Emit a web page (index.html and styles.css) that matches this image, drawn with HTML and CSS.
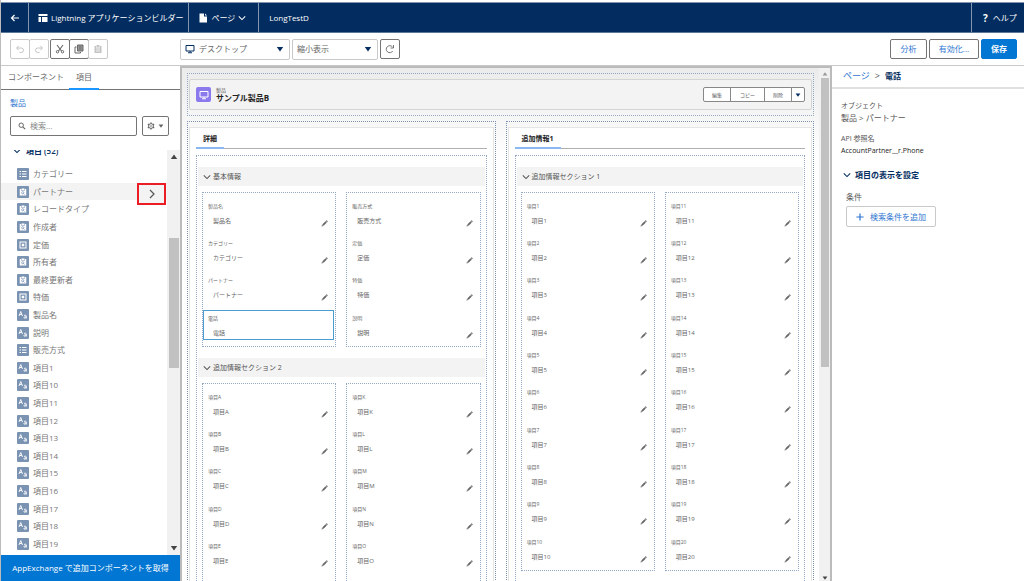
FILE: index.html
```
<!DOCTYPE html>
<html lang="ja">
<head>
<meta charset="utf-8">
<title>Lightning アプリケーションビルダー</title>
<link rel="stylesheet" href="styles.css">
</head>
<body>
<svg class="sprite" aria-hidden="true">
  <symbol id="pen" viewBox="0 0 14 14"><path d="M1 13l1-3.600 2.600 2.600zM2.600 8.800l6.400-6.400 2.600 2.600-6.400 6.400zM9.600 1.900l1-1q.7-.5 1.400.1l1 1q.6.700.1 1.400l-1 1z"/></symbol>
  <symbol id="chev" viewBox="0 0 10 10"><path d="M1 3l4 4 4-4" fill="none" stroke="currentColor" stroke-width="1.300"/></symbol>
  <symbol id="tri" viewBox="0 0 10 10"><path d="M1 2.500h8L5 8z"/></symbol>
  <symbol id="triup" viewBox="0 0 10 10"><path d="M1 7.500h8L5 2z"/></symbol>
  <symbol id="i-list" viewBox="0 0 24 24"><path d="M5 6h3v2H5zM10 6h9v2h-9zM5 11h3v2H5zM10 11h9v2h-9zM5 16h3v2H5zM10 16h9v2h-9z"/></symbol>
  <symbol id="i-look" viewBox="0 0 24 24"><path d="M9 5h6v3H9zM5.500 6H8v3h8V6h2.500v13h-13z"/><path d="M15 17l-2-2" stroke="#7b93b2" stroke-width="1.500"/><circle cx="11.500" cy="13.500" r="2.200" fill="none" stroke="#7b93b2" stroke-width="1.500"/></symbol>
  <symbol id="i-cur" viewBox="0 0 24 24"><path d="M5 5h14v14H5zM7 7v10h10V7z" fill-rule="evenodd"/><path d="M9.500 9.500h5v5h-5z"/></symbol>
  <symbol id="i-text" viewBox="0 0 24 24"><path d="M4 14l3.500-9L11 14M5.300 11h4.500" fill="none" stroke="currentColor" stroke-width="1.800"/><path d="M14 13q3-1.800 4.500.4V19M18.500 15.500q-5-.2-4.800 1.900.8 2.200 4.800-.4" fill="none" stroke="currentColor" stroke-width="1.800"/></symbol>
  <symbol id="monitor" viewBox="0 0 20 20"><path d="M2 3h16v11H2zM10 14v3M6 17.500h8" fill="none" stroke="currentColor" stroke-width="2"/></symbol>
  <symbol id="redo" viewBox="0 0 20 20"><path d="M16 8H7q-4 .5-4 4.500T7.500 17H11M12.500 3.500L17 8l-4.500 4.500" fill="none" stroke="currentColor" stroke-width="2"/></symbol>
</svg>

<header class="topbar">
  <button class="bar-item back" aria-label="戻る"><svg class="ico10" viewBox="0 0 20 20"><path d="M18 10H3M9 4l-6 6 6 6" fill="none" stroke="currentColor" stroke-width="2.400"/></svg></button>
  <div class="bar-item brand"><svg class="ico10" viewBox="0 0 20 20"><path d="M1 2h18v4H1zM1 8h5v10H1zM8 8h11v10H8z"/></svg><span>Lightning アプリケーションビルダー</span></div>
  <button class="bar-item pages"><svg class="ico10" viewBox="0 0 20 20"><path d="M3 1h9v6h6v12H3zM14 1l4 4h-4z"/></svg><span>ページ</span><svg class="ico8"><use href="#chev"/></svg></button>
  <h1 class="bar-item page-name">LongTestD</h1>
  <a class="bar-item help" href="#"><b>?</b><span>ヘルプ</span></a>
</header>

<div class="toolbar">
  <div class="group history">
    <button class="tool off" aria-label="元に戻す"><svg class="ico10 flip"><use href="#redo"/></svg></button>
    <button class="tool off" aria-label="やり直し"><svg class="ico10"><use href="#redo"/></svg></button>
  </div>
  <div class="group edit">
    <button class="tool" aria-label="切り取り"><svg class="ico10" viewBox="0 0 20 20"><path d="M4 2l9 12M16 2L7 14" stroke="currentColor" stroke-width="2.200"/><circle cx="5" cy="15.500" r="2.400" fill="none" stroke="currentColor" stroke-width="2"/><circle cx="15" cy="15.500" r="2.400" fill="none" stroke="currentColor" stroke-width="2"/></svg></button>
    <button class="tool" aria-label="コピー"><svg class="ico10" viewBox="0 0 20 20"><path d="M7 2h11v12H7z" fill="#999" stroke="currentColor" stroke-width="2"/><path d="M5 6H2v12h11v-2M10 6h5M10 10h5" fill="none" stroke="currentColor" stroke-width="2"/></svg></button>
    <button class="tool off" aria-label="貼り付け"><svg class="ico10" viewBox="0 0 20 20"><path d="M3 4h3v3h8V4h3v14H3z"/><path d="M7 2h6v4H7z"/><path d="M6 10h8M6 14h8" stroke="#fff" stroke-width="1.500"/></svg></button>
  </div>
  <div class="views">
    <label class="picker device"><svg class="ico10"><use href="#monitor"/></svg><select aria-label="デバイス"><option>デスクトップ</option></select><svg class="ico8 caret"><use href="#tri"/></svg></label>
    <label class="picker scale"><select aria-label="表示サイズ"><option>縮小表示</option></select><svg class="ico8 caret"><use href="#tri"/></svg></label>
    <button class="tool refresh" aria-label="更新"><svg class="ico10" viewBox="0 0 20 20"><path d="M15.500 14A7 7 0 1 1 15 6M17 2v6h-6" fill="none" stroke="currentColor" stroke-width="1.800"/></svg></button>
  </div>
  <div class="actions">
    <button class="btn analyze">分析</button>
    <button class="btn activate">有効化...</button>
    <button class="btn save">保存</button>
  </div>
</div>

<main class="workspace">
  <aside class="palette">
    <nav class="tabs">
      <button class="tab">コンポーネント</button>
      <button class="tab active">項目</button>
    </nav>
    <a class="object-link" href="#">製品</a>
    <div class="search-row">
      <label class="search"><svg class="ico8" viewBox="0 0 20 20"><circle cx="8" cy="8" r="5.500" fill="none" stroke="currentColor" stroke-width="2.500"/><path d="M12 12l6 6" stroke="currentColor" stroke-width="3"/></svg><input type="text" placeholder="検索..." aria-label="検索"></label>
      <button class="gear" aria-label="設定"><svg class="ico8" viewBox="0 0 20 20"><circle cx="10" cy="10" r="6" fill="none" stroke="currentColor" stroke-width="2.500"/><circle cx="10" cy="10" r="2" /><path d="M10 1v3M10 16v3M2.200 5.500l2.600 1.500M15.200 13l2.600 1.500M2.200 14.500l2.600-1.500M15.200 7l2.600-1.500" stroke="currentColor" stroke-width="3.500"/></svg><svg class="ico6"><use href="#tri"/></svg></button>
    </div>
    <div class="list-area">
      <div class="list-body">
        <h2 class="list-title"><svg class="ico8"><use href="#chev"/></svg>項目 (52)</h2>
        <ul class="items">
          <li class="item"><svg class="chip"><use href="#i-list"/></svg>カテゴリー</li>
          <li class="item hover"><svg class="chip"><use href="#i-look"/></svg>パートナー<button class="expand" aria-label="パートナーを開く"><svg class="ico10" viewBox="0 0 10 10"><path d="M3 1l4 4-4 4" fill="none" stroke="currentColor" stroke-width="1.200"/></svg></button></li>
          <li class="item"><svg class="chip"><use href="#i-look"/></svg>レコードタイプ</li>
          <li class="item"><svg class="chip"><use href="#i-look"/></svg>作成者</li>
          <li class="item"><svg class="chip"><use href="#i-cur"/></svg>定価</li>
          <li class="item"><svg class="chip"><use href="#i-look"/></svg>所有者</li>
          <li class="item"><svg class="chip"><use href="#i-look"/></svg>最終更新者</li>
          <li class="item"><svg class="chip"><use href="#i-cur"/></svg>特価</li>
          <li class="item"><svg class="chip"><use href="#i-text"/></svg>製品名</li>
          <li class="item"><svg class="chip"><use href="#i-text"/></svg>説明</li>
          <li class="item"><svg class="chip"><use href="#i-list"/></svg>販売方式</li>
          <li class="item"><svg class="chip"><use href="#i-text"/></svg>項目1</li>
          <li class="item"><svg class="chip"><use href="#i-text"/></svg>項目10</li>
          <li class="item"><svg class="chip"><use href="#i-text"/></svg>項目11</li>
          <li class="item"><svg class="chip"><use href="#i-text"/></svg>項目12</li>
          <li class="item"><svg class="chip"><use href="#i-text"/></svg>項目13</li>
          <li class="item"><svg class="chip"><use href="#i-text"/></svg>項目14</li>
          <li class="item"><svg class="chip"><use href="#i-text"/></svg>項目15</li>
          <li class="item"><svg class="chip"><use href="#i-text"/></svg>項目16</li>
          <li class="item"><svg class="chip"><use href="#i-text"/></svg>項目17</li>
          <li class="item"><svg class="chip"><use href="#i-text"/></svg>項目18</li>
          <li class="item"><svg class="chip"><use href="#i-text"/></svg>項目19</li>
        </ul>
      </div>
      <div class="scroll list-scroll"><svg class="ico8"><use href="#triup"/></svg><div class="rail"><div class="thumb"></div></div><svg class="ico8"><use href="#tri"/></svg></div>
    </div>
    <a class="exchange" href="#">AppExchange で追加コンポーネントを取得</a>
  </aside>

  <section class="canvas">
    <div class="stage">
      <div class="region head-region">
        <div class="record-head">
          <span class="record-icon"><svg class="ico10"><use href="#monitor"/></svg></span>
          <div class="record-title"><small>製品</small><strong>サンプル製品B</strong></div>
          <div class="record-actions">
            <button>編集</button><button>コピー</button><button>削除</button><button class="more" aria-label="その他"><svg class="ico6"><use href="#tri"/></svg></button>
          </div>
        </div>
      </div>
      <div class="columns">
        <div class="region column">
          <div class="card">
            <div class="card-tabs"><button class="card-tab">詳細</button></div>
            <div class="region detail">
              <h3 class="section"><svg class="ico8"><use href="#chev"/></svg>基本情報</h3>
              <div class="pair">
                <ul class="region fields">
                  <li class="field"><span>製品名</span><div>製品名<svg class="pen"><use href="#pen"/></svg></div></li>
                  <li class="field"><span>カテゴリー</span><div>カテゴリー<svg class="pen"><use href="#pen"/></svg></div></li>
                  <li class="field"><span>パートナー</span><div>パートナー<svg class="pen"><use href="#pen"/></svg></div></li>
                  <li class="field selected"><span>電話</span><div>電話</div></li>
                </ul>
                <ul class="region fields">
                  <li class="field"><span>販売方式</span><div>販売方式<svg class="pen"><use href="#pen"/></svg></div></li>
                  <li class="field"><span>定価</span><div>定価<svg class="pen"><use href="#pen"/></svg></div></li>
                  <li class="field"><span>特価</span><div>特価<svg class="pen"><use href="#pen"/></svg></div></li>
                  <li class="field"><span>説明</span><div>説明<svg class="pen"><use href="#pen"/></svg></div></li>
                </ul>
              </div>
              <h3 class="section"><svg class="ico8"><use href="#chev"/></svg>追加情報セクション 2</h3>
              <div class="pair">
                <ul class="region fields">
                  <li class="field"><span>項目A</span><div>項目A<svg class="pen"><use href="#pen"/></svg></div></li>
                  <li class="field"><span>項目B</span><div>項目B<svg class="pen"><use href="#pen"/></svg></div></li>
                  <li class="field"><span>項目C</span><div>項目C<svg class="pen"><use href="#pen"/></svg></div></li>
                  <li class="field"><span>項目D</span><div>項目D<svg class="pen"><use href="#pen"/></svg></div></li>
                  <li class="field"><span>項目E</span><div>項目E<svg class="pen"><use href="#pen"/></svg></div></li>
                  <li class="field"><span>項目F</span><div>項目F<svg class="pen"><use href="#pen"/></svg></div></li>
                </ul>
                <ul class="region fields">
                  <li class="field"><span>項目K</span><div>項目K<svg class="pen"><use href="#pen"/></svg></div></li>
                  <li class="field"><span>項目L</span><div>項目L<svg class="pen"><use href="#pen"/></svg></div></li>
                  <li class="field"><span>項目M</span><div>項目M<svg class="pen"><use href="#pen"/></svg></div></li>
                  <li class="field"><span>項目N</span><div>項目N<svg class="pen"><use href="#pen"/></svg></div></li>
                  <li class="field"><span>項目O</span><div>項目O<svg class="pen"><use href="#pen"/></svg></div></li>
                  <li class="field"><span>項目P</span><div>項目P<svg class="pen"><use href="#pen"/></svg></div></li>
                </ul>
              </div>
            </div>
          </div>
        </div>
        <div class="region column">
          <div class="card">
            <div class="card-tabs"><button class="card-tab">追加情報1</button></div>
            <div class="region detail">
              <h3 class="section"><svg class="ico8"><use href="#chev"/></svg>追加情報セクション 1</h3>
              <div class="pair">
                <ul class="region fields">
                  <li class="field"><span>項目1</span><div>項目1<svg class="pen"><use href="#pen"/></svg></div></li>
                  <li class="field"><span>項目2</span><div>項目2<svg class="pen"><use href="#pen"/></svg></div></li>
                  <li class="field"><span>項目3</span><div>項目3<svg class="pen"><use href="#pen"/></svg></div></li>
                  <li class="field"><span>項目4</span><div>項目4<svg class="pen"><use href="#pen"/></svg></div></li>
                  <li class="field"><span>項目5</span><div>項目5<svg class="pen"><use href="#pen"/></svg></div></li>
                  <li class="field"><span>項目6</span><div>項目6<svg class="pen"><use href="#pen"/></svg></div></li>
                  <li class="field"><span>項目7</span><div>項目7<svg class="pen"><use href="#pen"/></svg></div></li>
                  <li class="field"><span>項目8</span><div>項目8<svg class="pen"><use href="#pen"/></svg></div></li>
                  <li class="field"><span>項目9</span><div>項目9<svg class="pen"><use href="#pen"/></svg></div></li>
                  <li class="field"><span>項目10</span><div>項目10<svg class="pen"><use href="#pen"/></svg></div></li>
                </ul>
                <ul class="region fields">
                  <li class="field"><span>項目11</span><div>項目11<svg class="pen"><use href="#pen"/></svg></div></li>
                  <li class="field"><span>項目12</span><div>項目12<svg class="pen"><use href="#pen"/></svg></div></li>
                  <li class="field"><span>項目13</span><div>項目13<svg class="pen"><use href="#pen"/></svg></div></li>
                  <li class="field"><span>項目14</span><div>項目14<svg class="pen"><use href="#pen"/></svg></div></li>
                  <li class="field"><span>項目15</span><div>項目15<svg class="pen"><use href="#pen"/></svg></div></li>
                  <li class="field"><span>項目16</span><div>項目16<svg class="pen"><use href="#pen"/></svg></div></li>
                  <li class="field"><span>項目17</span><div>項目17<svg class="pen"><use href="#pen"/></svg></div></li>
                  <li class="field"><span>項目18</span><div>項目18<svg class="pen"><use href="#pen"/></svg></div></li>
                  <li class="field"><span>項目19</span><div>項目19<svg class="pen"><use href="#pen"/></svg></div></li>
                  <li class="field"><span>項目20</span><div>項目20<svg class="pen"><use href="#pen"/></svg></div></li>
                </ul>
              </div>
            </div>
          </div>
        </div>
      </div>
    </div>
    <div class="scroll canvas-scroll"><svg class="ico6 dim"><use href="#triup"/></svg><div class="rail"><div class="thumb"></div></div><svg class="ico6"><use href="#tri"/></svg></div>
  </section>

  <aside class="props">
    <nav class="crumbs"><a href="#">ページ</a><span>&gt;</span><strong>電話</strong></nav>
    <dl class="facts">
      <dt>オブジェクト</dt><dd>製品 &gt; パートナー</dd>
      <dt>API 参照名</dt><dd class="api-name">AccountPartner__r.Phone</dd>
    </dl>
    <h2 class="props-title"><svg class="ico8"><use href="#chev"/></svg>項目の表示を設定</h2>
    <div class="filter">
      <span>条件</span>
      <button class="add"><svg class="ico8" viewBox="0 0 20 20"><path d="M10 1v18M1 10h18" stroke="currentColor" stroke-width="3"/></svg>検索条件を追加</button>
    </div>
  </aside>
</main>
</body>
</html>
```
FILE: styles.css
```
* { box-sizing: border-box; }
body {
  margin: 0;
  height: 100vh;
  display: flex;
  flex-direction: column;
  overflow: hidden;
  padding-top: 2px;
  border-left: 1px solid #bbb;
  background: #fff;
  color: #666;
  font-family: "Open Sans", "Noto Sans CJK JP", sans-serif;
  font-size: 8px;
  line-height: 12px;
}
button, input, select { font: inherit; color: inherit; margin: 0; padding: 0; background: none; border: 0; }
h1, h2, h3, ul, dl, dd { margin: 0; padding: 0; font: inherit; list-style: none; }
a { color: #2e75d0; text-decoration: none; }
svg { fill: currentColor; flex: none; display: block; }
.sprite { position: absolute; width: 0; height: 0; }
.ico10 { width: 10px; height: 10px; }
.ico8 { width: 8px; height: 8px; }
.ico6 { width: 6px; height: 6px; }
.flip { transform: scaleX(-1); }

.topbar { display: flex; height: 31px; flex: none; background: #032d60; color: #fff; border-top: 1px solid #8296af; border-bottom: 1px solid #5d7896; }
.bar-item { display: flex; align-items: center; gap: 3px; padding: 0 8px; border-right: 1px solid #8296af; color: #fff; white-space: nowrap; }
.back { width: 28px; justify-content: center; }
.brand { padding: 0 5px 0 9px; }
.pages { padding: 0 12px 0 9px; }
.page-name { border-right: 0; padding: 0 10px; }
.help { margin-left: auto; border-right: 0; border-left: 1px solid #8296af; width: 53px; gap: 5px; padding: 0 0 0 11px; }
.help b { font-size: 10px; }

.toolbar { display: flex; align-items: center; height: 33px; flex: none; padding: 0 7px 0 9px; border-bottom: 1px solid #c9c9c9; gap: 1px; }
.group { display: flex; }
.tool { width: 20px; height: 20px; display: flex; align-items: center; justify-content: center; border: 1px solid #747474; color: #666; border-radius: 2px; }
.tool + .tool { margin-left: -1px; }
.tool.off { color: #c4c4c4; border-color: #c9c9c9; }
.views { display: flex; gap: 2px; margin-left: 71px; align-items: center; }
.picker { display: flex; align-items: center; position: relative; height: 21px; border: 1px solid #c9c9c9; border-radius: 2px; padding-left: 4px; gap: 4px; }
.picker select { appearance: none; flex: 1; height: 19px; }
.device { width: 110px; }
.device > .ico10 { color: #032d60; }
.scale { width: 86px; }
.caret { position: absolute; right: 5px; color: #032d60; pointer-events: none; }
.actions { display: flex; gap: 2px; margin-left: auto; }
.btn { height: 20px; border: 1px solid #747474; border-radius: 2px; color: #2e75d0; }
.analyze { width: 37px; }
.activate { width: 50px; }
.save { width: 36px; background: #0176d3; border-color: #0176d3; color: #fff; font-weight: 600; }

.workspace { display: flex; flex: 1; min-height: 0; }
.palette { width: 179px; flex: none; display: flex; flex-direction: column; }
.tabs { display: flex; height: 24px; flex: none; border-bottom: 1px solid #747474; padding-left: 7px; gap: 5px; }
.tab { height: 24px; border-bottom: 2px solid transparent; }
.tab.active { padding: 0 7px; border-color: #1b96ff; }
.object-link { padding: 7px 9px 0; }
.search-row { display: flex; gap: 5px; margin-top: 7px; padding: 0 11px 0 9px; height: 20px; flex: none; }
.search { flex: 1; display: flex; align-items: center; gap: 4px; border: 1px solid #747474; border-radius: 2px; padding-left: 7px; min-width: 0; }
.search input { flex: 1; min-width: 0; outline: 0; }
.search input::placeholder { color: #888; }
.gear { width: 27px; display: flex; align-items: center; justify-content: center; gap: 3px; border: 1px solid #747474; border-radius: 2px; }
.list-area { display: flex; flex: 1; min-height: 0; margin-top: 14px; overflow: hidden; }
.list-body { flex: 1; overflow: hidden; }
.list-title { display: flex; align-items: center; gap: 5px; height: 14px; margin: -6px 0 7px; padding-left: 12px; font-weight: 600; color: #032d60; }
.item { position: relative; display: flex; align-items: center; gap: 4px; height: 18px; padding-left: 16px; color: #777; }
.item:nth-child(5n), .item:nth-child(5n + 2) { height: 17px; }
.hover { background: #f3f3f3; }
.chip { width: 12px; height: 12px; border-radius: 1px; background: #7b93b2; color: #fff; }
.expand { position: absolute; right: 1px; top: 0; z-index: 1; width: 29px; height: 22px; display: flex; align-items: center; justify-content: center; border: 2px solid #ec1c24; background: #f3f3f3; color: #555; }
.scroll { display: flex; flex-direction: column; align-items: center; background: #f1f1f1; color: #444; }
.rail { flex: 1; width: 100%; }
.thumb { background: #c1c1c1; margin: 0 auto; }
.list-scroll { width: 13px; padding: 3px 0; }
.list-scroll .thumb { width: 10px; height: 130px; margin-top: 77px; }
.exchange { display: flex; align-items: center; justify-content: center; height: 26px; flex: none; background: #0176d3; color: #fff; white-space: nowrap; }

.canvas { flex: 1; min-width: 0; display: flex; overflow: hidden; border: 2px solid #bbb; border-bottom: 0; background: linear-gradient(#ebebeb, #fff 90px); }
.stage { flex: 1; min-width: 0; padding: 5px 5px 0 5px; }
.region { border: 1px dotted #93a8c4; }
.head-region { padding: 5px 1px; }
.record-head { display: flex; align-items: center; height: 31px; padding: 0 6px; gap: 5px; background: #f3f3f3; border: 1px solid #d4d4d4; border-radius: 2px; }
.record-icon { display: flex; align-items: center; justify-content: center; width: 15px; height: 15px; border-radius: 2px; background: #8a7aed; color: #fff; }
.record-title { display: flex; flex-direction: column; color: #222; }
.record-title small { font-size: 5px; line-height: 6px; color: #555; }
.record-title strong { line-height: 10px; }
.record-actions { display: flex; margin-left: auto; }
.record-actions button { width: 28px; height: 15px; font-size: 5px; line-height: 8px; border: 1px solid #888; margin-left: -1px; background: #fff; color: #666; }
.record-actions button:first-child { border-radius: 2px 0 0 2px; }
.record-actions button:nth-child(2) { width: 35px; }
.record-actions .more { width: 14px; display: flex; align-items: center; justify-content: center; border-radius: 0 2px 2px 0; color: #032d60; }
.columns { display: grid; grid-template-columns: 1fr 1fr; gap: 10px; margin-top: 5px; }
.column { padding: 5px 1px; border-color: #7c90b0; }
.card { background: #fff; border: 1px solid #e5e5e5; padding: 0 6px; }
.card-tabs { height: 21px; border-bottom: 1px solid #b0b0b0; }
.card-tab { height: 21px; padding: 2px 7px 0; border-bottom: 2px solid #8ab8f0; font-size: 7px; font-weight: 700; color: #222; }
.detail { margin-top: 6px; padding-top: 11px; }
.section { display: flex; align-items: center; gap: 2px; height: 19px; margin: 0 1px; padding-left: 5px; background: #f3f3f3; font-size: 7px; color: #555; }
.pair { display: grid; grid-template-columns: 1fr 1fr; gap: 10px; padding: 6px 5px 11px; }
.fields { padding: 0 0 4px; }
.field { height: 37px; padding: 9px 6px 0 5px; font-size: 6px; line-height: 8px; color: #666; }
.field:nth-child(3n) { height: 38px; }
.field span { display: block; font-size: 5px; line-height: 8px; }
.field div { display: flex; justify-content: space-between; padding: 7px 1px 0 5px; }
.pen { width: 7px; height: 7px; margin-top: 3px; }
.field.selected { height: 30px; padding: 4px 5px 0; margin: 5px 1px 2px 0; outline: 1px solid #4b9cd3; outline-offset: -1px; }
.canvas-scroll { width: 11px; padding: 3px 0 0; }
.dim { color: #999; }
.canvas-scroll .thumb { width: 8px; height: 289px; margin-top: 1px; }

.props { width: 192px; flex: none; color: #555; }
.crumbs { display: flex; align-items: center; gap: 5px; height: 23px; padding: 0 11px 2px; border-bottom: 2px solid #e0e0e0; font-size: 9px; }
.crumbs strong { font-size: 8px; color: #032d60; font-weight: 600; }
.facts { padding: 10px 9px 0; }
.facts dt { font-size: 7px; line-height: 13px; }
.facts dd { line-height: 12px; margin-bottom: 8px; }
.facts .api-name { font-size: 7px; color: #222; }
.props-title { display: flex; align-items: center; gap: 4px; height: 14px; margin-top: 11px; padding-left: 11px; font-weight: 600; color: #032d60; }
.filter { padding: 9px 14px; }
.filter span { display: block; }
.add { display: flex; align-items: center; justify-content: center; gap: 6px; width: 90px; height: 21px; margin-top: 3px; border: 1px solid #c9c9c9; border-radius: 2px; color: #2e75d0; }
```
